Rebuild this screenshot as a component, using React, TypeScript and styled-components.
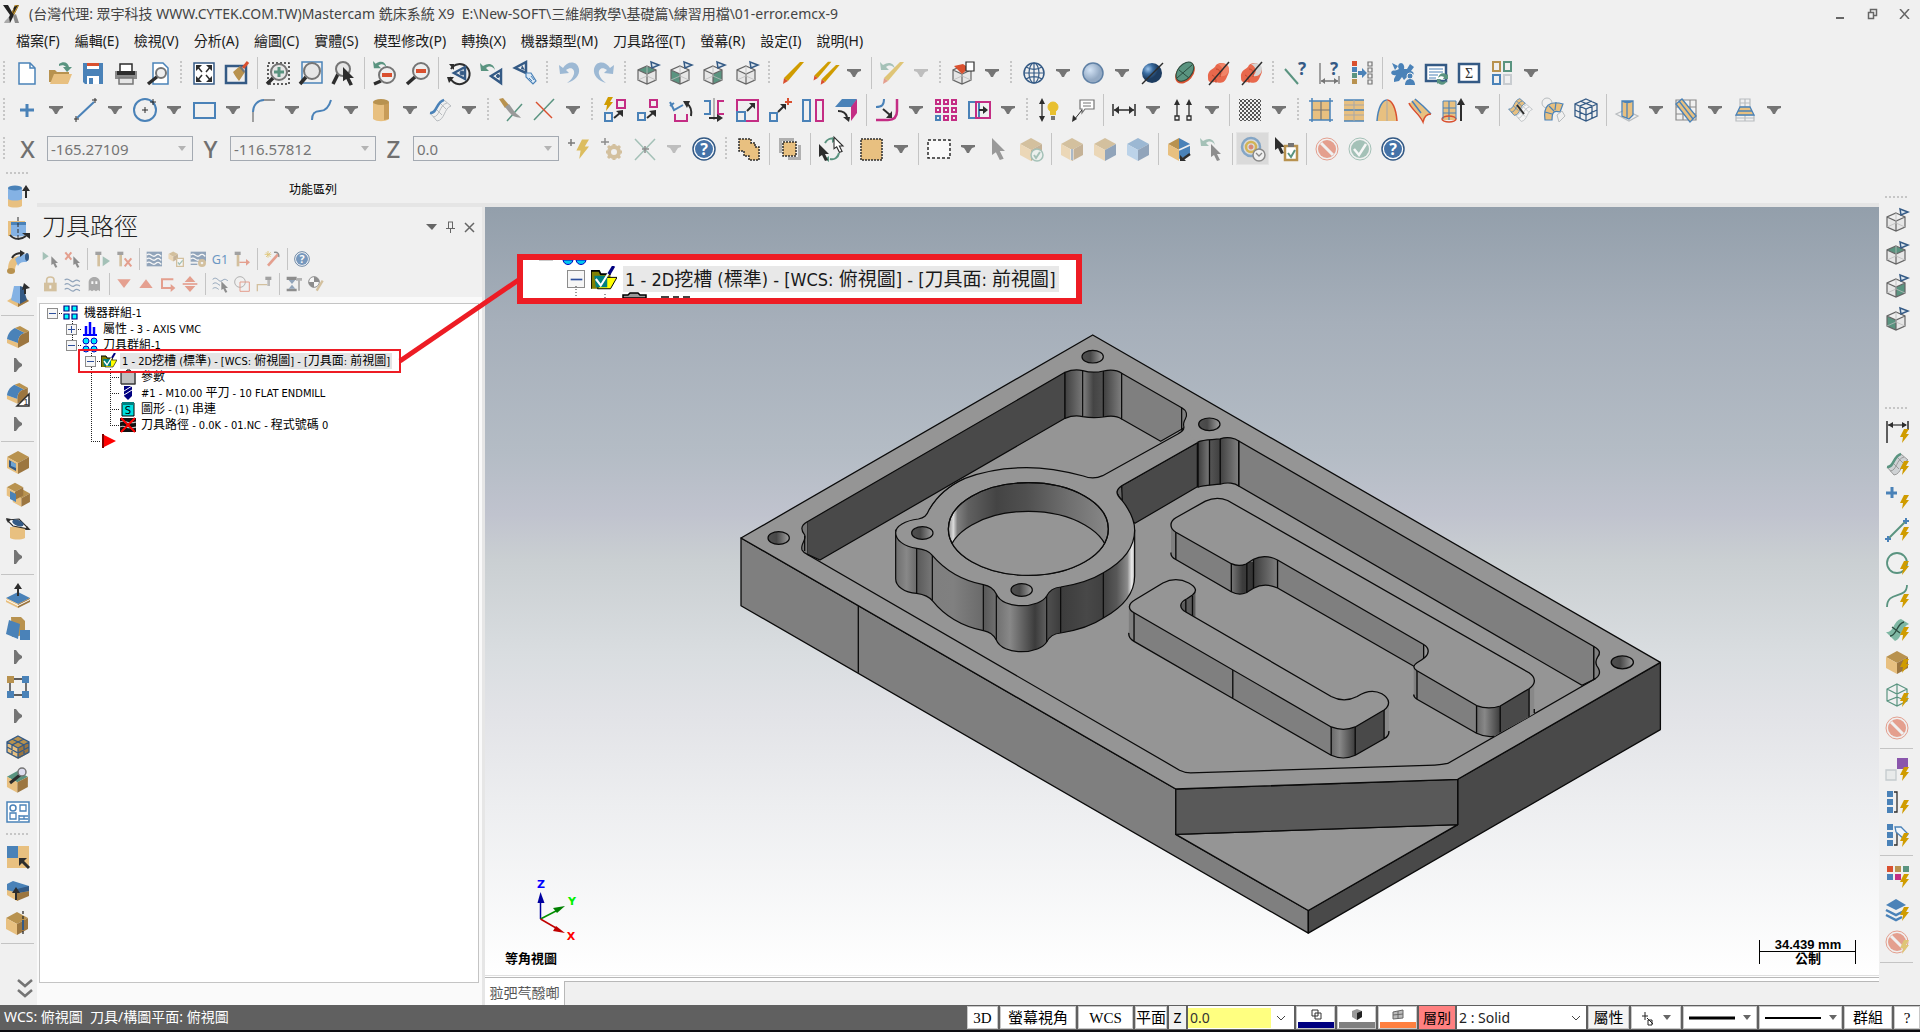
import React, { Fragment, createElement } from "react";
import type { ReactNode } from "react";
import styled, { createGlobalStyle, css } from "styled-components";

/* ---------- palette ---------- */
const B = "#4a82b8";
const N = "#345a85";
const G = "#5a9480";
const M = "#c42d84";
const K = "#2d2d2d";
const O = "#e8c080";
const OD = "#b8924f";
const OX = "#9c7640";
const R = "#d9502f";
const Y = "#d09c00";
const GR = "#757575";
const LG = "#b8bcbf";

/* ---------- drawing helpers ---------- */
const g = (...c: ReactNode[]) => createElement("g", null, ...c);
const P = (d: string, stroke: string, w = 1.5, fill = "none", dash?: string) => (
  <path d={d} stroke={stroke} strokeWidth={w} fill={fill} strokeDasharray={dash} />
);
const F = (d: string, fill: string) => <path d={d} fill={fill} />;
const C = (cx: number, cy: number, r: number, stroke: string, w = 1.5, fill = "none") => (
  <circle cx={cx} cy={cy} r={r} stroke={stroke} strokeWidth={w} fill={fill} />
);
const at = (x: number, y: number, s: number, c: ReactNode) => <g transform={`translate(${x} ${y}) scale(${s})`}>{c}</g>;
const faded = (c: ReactNode, o = 0.5) => <g opacity={o}>{c}</g>;
const sign = (t: string, x: number, y: number, s: number, fill: string) => (
  <text x={x} y={y} fontSize={s} fontWeight="700" fontFamily='"Noto Sans", sans-serif' textAnchor="middle" fill={fill}>{t}</text>
);

const bolt = (x: number, y: number) => at(x, y, 1, F("M5 0h5L7 5h3L3 14l1-6H1z", Y));
const cursor = (x: number, y: number, fill = K) => at(x, y, 1, F("M0 0v13l3-2 3 6 3-1-3-6h4z", fill));
const lens = (x: number, y: number, r: number, fill = "none") =>
  g(P(`M${x - r + 2} ${y + r - 2}L1 23`, K, 3.5), C(x, y, r, GR, 2, fill));
const cube = (top: string, left: string, right: string) =>
  g(F("M12 1l11 6-11 6L1 7z", top), F("M1 7l11 6v11L1 18z", left), F("M23 7l-11 6v11l11-6z", right));
const wireCube = (t = "none", l = "none", r = "none") =>
  g(
    F("M2 9l9 4v10l-9-4z", l === "none" ? "#e6e6e6" : l),
    F("M20 9l-9 4v10l9-4z", r === "none" ? "#e6e6e6" : r),
    F("M11 5l9 4-9 4-9-4z", t === "none" ? "#efefef" : t),
    P("M11 5l9 4v10l-9 4-9-4V9zM2 9l9 4 9-4M11 13v10", "#666", 1.2),
    P("M11 5v10l-9 4M11 15l9 4", "#bbb", 0.8)
  );
const viewCube = (t?: string, l?: string, r?: string) => g(wireCube(t, l, r), P("M15 1l8 3-7 3z", N, 1.5, "#dde6ee"));
const pencil = (dx = 0) => at(dx, 0, 1, g(F("M20 1h4L8 20l-4-3z", Y), F("M4 17l4 3-5 3z", R)));
const backArrow = (x: number, y: number, s = 1) =>
  at(x, y, s, F("M0 0l1 8 8 0-3-3c4-3 7-1 9 2C14 1 9-1 3 3z", G));
const noSign = g(C(12, 12, 11, R, 1), P("M4 8l12 12", "#f0f0f0", 3), C(12, 12, 9, R, 0, R), P("M6 6l12 12", "#f0f0f0", 3));
const helpSign = g(C(12, 12, 11, N, 1.5, "#fff"), C(12, 12, 9, B, 0, "#4573a8"), sign("?", 12, 18, 16, "#fff"));
const surf = (fill: string, line: string) =>
  g(F("M2 15C9 16 8 4 16 2l7 6c-7 2-6 14-14 15z", fill), P("M2 15C9 16 8 4 16 2l7 6c-7 2-6 14-14 15zM5 19c7 0 6-12 14-14M8 11l6 6M12 5l6 6", line, 1));
const limb = (a: string, b: string) =>
  g(F("M2 17C1 8 8 9 10 4c5-4 10-1 11 1 4 5 1 8-1 13-3 6-8 3-11 3-5 1-7 0-7-4z", a), F("M12 3c6-2 10 0 11 4 0 6-4 9-9 8 4-4 4-8-2-12z", b), P("M6 14c4 2 4 5 4 8M10 8c4 0 5 4 4 8", "#b8402a", 0.8), P("M3 24L23 1", K, 1.5));
const roundedEdge = g(
  F("M1 15l11 4v5L1 19z", O),
  F("M1 15C2 9 5 6 9 4l10 5c-5 1-7 5-7 10z", B),
  F("M9 4l5-2 9 5-4 2z", OD),
  F("M12 24v-5c0-5 2-9 7-10l4-2v11z", OX)
);

const icons: Record<string, ReactNode> = {
  newFile: g(P("M4 2h11l5 5v16H4z", B, 1.5, "#fff"), P("M15 2v5h5", B)),
  open: g(F("M1 9h6l2 2h12v10H1z", OD), F("M6 13h18l-4 10H2z", O), F("M11 3c4-3 9-2 10 3h3l-5 5-4-5h3c-2-2-4-2-7-1z", G)),
  save: g(F("M2 2h20v21H4l-2-2z", B), F("M6 2h12v3H6z", R), F("M6 5h12v3H6z", "#fff"), F("M6 15h12v8H6z", "#fff"), F("M8 17h4v6H8z", B)),
  print: g(P("M6 10V3h12v7", K, 1.5, "#fff"), F("M1 10h22v8H1z", "#8a8a8a"), F("M3 10h18v4H3z", K), P("M5 17h14v6H5z", GR, 1.5, "#e6e6e6")),
  preview: g(P("M6 2h10l5 5v16H6z", B, 1.5, "#fff"), lens(14, 12, 5, "#eee")),
  fit: g(P("M2 2h20v21H2z", N, 1.5, "#fff"), P("M5 5l5 6M19 5l-5 6M5 20l5-6M19 20l-5-6", K, 1.5), F("M4 4h6l-6 6zM20 4h-6l6 6zM4 21h6l-6-6zM20 21h-6l6-6z", K)),
  repaint: g(P("M1 5h20v17H1z", N, 2.5), F("M8 11l7-6 5 6-6 9c-2-3-4-5-6-9z", OD), P("M18 7l5-6", R, 3), F("M14 6l5 6 1-2-4-5z", GR)),
  zoomWin: g(P("M2 2h21v21H2z", K, 1.5, "none", "2 2"), lens(13, 11, 8, "#e6e6e6"), P("M13 6v10M8 11h10", G, 3)),
  zoomTarget: g(P("M3 1h20v21H3z", B), lens(13, 10, 8, "#e6e6e6")),
  zoomSel: g(lens(11, 8, 7, "#e6e6e6"), at(11, 6, 1.1, cursor(0, 0))),
  unzoom: g(lens(14, 14, 8, "#eee"), P("M9 14h10", R, 4), backArrow(0, 0, 0.9)),
  zoomOut: g(lens(15, 10, 8, "#eee"), P("M10 10h10", R, 4)),
  dynView: g(P("M4 8a10 10 0 1 1-1 8", K, 2), F("M0 16h7l-5 6zM2 3l5 0 0 6z", K), P("M18 6L7 12l11 6z", N, 2.5), C(15, 12, 2, N, 1, N)),
  prevView: g(backArrow(0, 2), P("M21 9l-10 6 10 7z", N, 2.5), C(18, 15, 1.5, N, 1, N)),
  namedView: g(P("M13 1L2 7l11 5z", N, 2.5), F("M9 4l3 5-4-1z", N), P("M13 12l5 0 5 8-3 3-7-7z", B, 1.2, "#dce9f5"), P("M16 17l3 3M18 15l3 4", B, 1)),
  undo: faded(F("M1 4l1 9 9-1-3-3c5-4 9-1 8 4-1 4-4 7-7 9 8-2 13-8 12-14C19-1 9 0 5 7z", B)),
  redo: faded(F("M23 4l-1 9-9-1 3-3C11 5 7 8 8 13c1 4 4 7 7 9C7 20 2 14 3 8 5-1 15 0 19 7z", B)),
  vTop: viewCube(G),
  vFront: viewCube("none", G),
  vRight: viewCube("none", "none", G),
  vIso: viewCube(),
  pencil: pencil(),
  pencils: g(at(-2, 0, 0.85, pencil()), at(5, 3, 0.9, pencil())),
  undelete: faded(g(backArrow(0, 1), pencil())),
  redCube: g(wireCube(), F("M3 5l9-2 6 4-7 6z", R), P("M15 1h8v9h-8z", K, 1.2, "#fff")),
  globe: g(C(12, 12, 10, N), P("M12 2v20M2 12h20M4 6c5 3 11 3 16 0M4 18c5-3 11-3 16 0", N, 1.2), <ellipse cx="12" cy="12" rx="5" ry="10" fill="none" stroke={N} strokeWidth="1.2" />),
  shade: C(12, 12, 10, "#5f80a5", 1.5, "url(#shadeLight)"),
  ball: g(C(12, 12, 10, N, 0, "url(#shadeDark)"), P("M2 23L23 2", K, 1.5)),
  leaf: g(<ellipse cx="12" cy="12" rx="8" ry="12" transform="rotate(40 12 12)" fill={R} />, <ellipse cx="11" cy="11" rx="7" ry="11" transform="rotate(40 12 12)" fill={G} stroke="#2b4d40" />, P("M4 17L19 4M6 9l10 8", "#2b4d40", 1)),
  limbA: limb("#e8684c", "#f08468"),
  limbC: limb("#e8684c", "#d4d4d4"),
  anaPoint: g(P("M1 8l13 15", G, 2), sign("?", 18, 14, 17, N)),
  anaDist: g(P("M3 2v21M22 15v8M4 20h17", GR, 1.3), F("M4 20l4-3v6zM21 20l-4-3v6z", GR), sign("?", 17, 14, 17, N)),
  anaAttr: g(F("M2 0h5v5H2z", R), F("M2 6h5v5H2z", B), F("M2 12h5v5H2z", G), F("M2 18h5v5H2z", OD), P("M18 1h4v4h-4zM18 7h4v4h-4zM18 13h4v4h-4zM18 19h4v4h-4z", GR, 1.2), F("M8 10h4V7l5 5-5 5v-3H8z", B)),
  puzzle: g(F("M8 8c-2-3 0-6 2-6s4 3 3 6h3l3-5 4 3-3 4c4 1 3 5 0 4l-3-1-1 3-3 3-2-3-3 4-5 1v-3l2-4c-4 1-6-2-4-4 2-1 4 0 7-2z", B), C(19, 15, 3, "#f0f0f0", 1, B), F("M14 24c0-8 10-8 10 0z", B), F("M1 2l6 3-3 4z", B)),
  list: g(P("M2 4h20v16H2z", N, 2.5, "#fff"), P("M5 8h14M5 11h14M5 14h9M5 17h7", B, 1.2), F("M14 17c1-5 6-6 9-3l1-1v5h-5l1-2c-2-1-4-1-6 1zM23 19c-1 5-6 6-9 3l-1 1v-5h4l-1 2c2 1 5 1 7-1z", G)),
  sigma: g(P("M2 3h20v18H2z", N, 2.5, "#fff"), <text x="12" y="17" fontSize="14" fontFamily='"Liberation Serif", serif' textAnchor="middle" fill={K}>Σ</text>),
  grid4: g(P("M3 1h7v9H3z", OD, 2), P("M14 1h7v9h-7z", G, 2), P("M3 14h7v9H3z", B, 2), P("M14 14h7v9h-7z", "#c8ccd0", 2)),

  point: P("M12 6v13M5 12h14", B, 3),
  line: g(P("M3 20L20 4", B, 2), P("M0 21h5M2 18v6M18 2h5M21 0v5", K, 1)),
  circle: g(C(12, 12, 11, B, 2), P("M9 12h6M12 9v6M17 4h6M20 1v6", K, 1)),
  rect: P("M2 5h21v15H2z", B, 2),
  fillet: g(P("M2 14C2 7 7 2 13 2", B, 2), P("M13 2h11M2 14v10", GR, 1.3)),
  spline: P("M2 22c0-6 2-9 8-9s9-4 11-11", B, 2),
  cylinder: g(F("M4 4v17c4 3 12 3 16 0V4z", O), F("M15 5v17l5-1V4z", "#c89c58"), <ellipse cx="12" cy="4" rx="8" ry="3" fill={OD} />),
  surface: g(surf("none", LG), P("M2 15C9 16 8 4 16 2", B, 2.5)),
  trim: g(P("M23 6L8 23", G, 1.5), F("M0 1l4-1 6 7-4 3z", OD), F("M6 9l4-3 5 7c2 3 5 4 7 7-6-1-9-2-12-6z", "#999")),
  cross: g(P("M22 1L2 22", G, 1.5), P("M4 4l16 16", R, 1.5)),
  xDyn: g(bolt(0, -1), P("M14 2h8v8h-8z", M, 2), P("M2 15h7v8H2z", B, 2), P("M11 20l6-5", K, 2), F("M20 12v7l-7-6z", K)),
  xTrans: g(P("M14 2h7v7h-7z", M, 2), P("M2 15h7v7H2z", B, 2), P("M11 20l6-5", K, 2), F("M20 12v7l-7-6z", K)),
  xRot: g(P("M1 4l4 8 9-5M1 8l4-3", B, 2), P("M6 16v7h12v-7", M, 2), P("M22 18c1-6 0-10-5-13", K, 2), F("M14 3l7 0-3 7z", K)),
  xMirror: g(P("M12 0v22", GR, 1), P("M2 3h6v13H2", B, 2), P("M22 3h-6v13h6", M, 2), P("M7 20h10", K, 2), F("M15 16l6 4-6 4z", K)),
  xScale: g(P("M2 2h21v21H2z", M, 2), P("M2 14h8v9H2z", B, 2), P("M12 13l6-6", K, 2), F("M20 5v6l-6-6z", K)),
  xMove: g(P("M2 15h7v8H2z", B, 2), P("M10 14l6-6", K, 2), F("M18 6v6l-6-6z", K), P("M20 0v7M17 4h7", R, 2)),
  xOffset: g(P("M2 2h7v21H2z", B, 2), P("M15 2h7v21h-7z", M, 2)),
  xProj: g(F("M8 1h15l-5 8H1z", B), F("M23 1v14l-6 8V9z", M), P("M4 13c5 0 8 2 9 6", K, 2), F("M9 19h7l-1 5z", K)),
  xOffC: g(P("M1 9c6 0 8-2 8-8", B, 2), P("M1 22h12c6 0 9-3 9-9V1", M, 2.5), P("M8 11l7 6", K, 2), F("M17 13v7h-6z", K)),
  xArray: g(P("M2 2h4v4H2zM10 2h4v4h-4zM18 2h4v4h-4zM2 10h4v4H2zM10 10h4v4h-4zM18 10h4v4h-4zM10 18h4v4h-4zM18 18h4v4h-4z", M, 2), P("M2 18h4v4H2z", B, 2)),
  xStretch: g(P("M2 4h10v16H2z", B, 2), P("M9 4h14v16H9z", M, 2), P("M12 12h5", K, 2), F("M16 8l5 4-5 4z", K)),
  bulb: g(P("M4 3v18", K, 1.3), F("M4 0l3 6H1zM4 24l3-6H1z", K), C(15, 9, 5, "#e8c030", 1, "#e8c030"), F("M12 12h6v5h-6z", "#e8c030"), F("M13 18h4v4h-4z", "#777")),
  note: g(P("M9 2h14v9h-9l-3 4v-4H9z", GR, 1.2, "#fff"), P("M12 5h8M12 8h8", GR, 1), P("M11 12L3 22", K, 1), F("M1 24l1-7 4 4z", K)),
  dim: g(P("M1 6v12M23 6v12M2 12h20", K, 1.5), F("M2 12l5-4v8zM22 12l-5-4v8z", K)),
  twoArrow: g(P("M6 4v14M18 4v14M4 18h4v4H4zM16 18h4v4h-4z", K, 1.3), F("M6 1l3 6H3zM18 1l3 6h-6z", K)),
  checker: g(<rect x="1" y="1" width="22" height="22" fill="url(#check)" />),
  sfA: g(F("M3 3h18v19H3z", O), P("M12 3v19M3 12h18", GR, 1.2), P("M3 0v24M21 0v24M0 3h24M0 22h24", B, 1.5)),
  sfB: g(F("M2 2h20v21H2z", O), P("M2 2h20M2 12h20M2 23h20", B, 1.5), P("M2 7h20M2 17h20M12 2v21", "#a8a8a8", 1)),
  sfC: g(F("M2 23C3 10 7 2 12 2s9 8 10 21z", O), P("M2 23C3 10 7 2 12 2", B), P("M12 2c5 0 9 8 10 21", R), P("M12 2v21", "#a8a8a8", 1)),
  sfD: g(F("M1 6l6-5 8 7c3 3 5 5 8 8-4 0-6 3-7 8-2-4-4-7-7-10z", O), P("M7 1l8 7c3 3 5 5 8 8M4 3l9 12", B), P("M1 5c2 6 10 10 14 19 1-5 4-8 8-8", R)),
  sfE: g(F("M2 3h13v19H2z", O), P("M2 3h13M2 10h13M2 15h13M8 3v19", B, 1.2), <ellipse cx="8" cy="21" rx="7" ry="3" fill="none" stroke={R} strokeWidth="1.5" />, P("M2 3v18M15 3v18", B, 1), P("M20 5v18", K, 2), F("M20 0l4 7h-8z", K)),
  sfF: g(at(6, 5, 0.8, surf("#f4f4f4", LG)), at(-1, -1, 0.8, surf(O, B)), P("M9 7l7 9", K, 2)),
  sfG: g(C(6, 5, 5, LG, 1), F("M4 22C2 8 8 2 22 6l-3 8c-6-2-8 0-8 8z", O), P("M4 22C2 8 8 2 22 6l-3 8c-6-2-8 0-8 8zM8 8l5 5M4 14l7 2M15 4l-1 8", B, 1.2), P("M16 17l5-4 3 5-6 6z", LG, 1)),
  sfH: g(P("M12 1l11 5v12l-11 5L1 18V6zM1 6l11 5 11-5M12 11v12M1 12l11 5 11-5M6 3l12 5v12M18 3L6 8v12", N, 1.3)),
  fly: g(P("M1 16l9-4 13 6-9 5z", LG, 1.2), F("M7 3h11v14l-3 3H8z", O), P("M7 3h11v14l-4 4-7-3zM12 3v17M7 3c3 2 8 2 11 0", B, 1.3)),
  flz: g(P("M2 2h20v20H2zM2 9h20M2 16h20M9 2v20M16 2v20", "#8a8a8a", 1.2), F("M2 6l6-5 14 17-6 6z", O), P("M2 6l6-5 14 17-6 6zM5 3l14 18", B, 1.3)),
  flc: g(P("M7 1h10v8H7zM3 17h18v6H3zM12 1v22M7 5h10M3 20h18", LG, 1.2), F("M7 9h10l4 8H3z", O), P("M7 9h10l4 8H3zM5 13h14", B, 1.3)),

  flashPt: faded(g(P("M4 2v7M1 6h7", K, 1.5), at(8, 1, 1.4, bolt(0, 1))), 0.6),
  gearPt: faded(g(P("M5 1v7M1 5h8", K, 1.5), C(14, 15, 5, OD, 4), P("M14 7v3M14 20v3M6 15h3M19 15h3M8 9l2 2M18 19l2 2M20 9l-2 2M10 19l-2 2", OD, 3))),
  crossPt: faded(g(P("M2 2l20 21M22 2L2 23", G, 1.5), P("M12 9v7M9 12h7", K, 1.5))),
  help: helpSign,
  selA: P("M2 2h12v4h4v4h4v13H12v-4H7v-5H2z", K, 1.5, O, "2 1"),
  selB: g(F("M1 1h15v3H4v12H1z", "#b0b0b0"), F("M10 20h10V8h3v15H10z", "#b0b0b0"), P("M5 5h13v14H5z", K, 1.5, O, "2 1")),
  selC: g(P("M6 6c2-4 6-5 9-4M20 16c-1 5-5 7-9 6", G, 2), F("M13 0l4 3-4 3zM10 19v6l-4-3z", G), cursor(0, 7), at(15, 0, 0.9, P("M0 0v13l3-2 3 6 3-1-3-6h4z", K, 1.2, "#fff"))),
  selBox: P("M1 2h21v21H1z", K, 1.5, O, "2 1"),
  selEmpty: P("M1 3h22v18H1z", K, 1.5, "#fafafa", "3 2"),
  arrowGrey: faded(at(6, 1, 1.3, cursor(0, 0, "#444"))),
  boxCheck: faded(g(cube(OD, O, OX), C(18, 18, 6, G, 1.5, "#e8f0ec"), P("M15 18l2 3 4-6", G, 2))),
  box1: faded(g(cube(OD, O, OX), P("M12 12v11", "#fff", 3), P("M12 12v11", N, 1.5))),
  box2: faded(cube(OD, O, N)),
  box3: faded(cube(B, "#8ab8e4", N)),
  box4: g(F("M12 1l11 6-11 6z", B), F("M12 1v12L1 7z", OD), F("M1 7l11 6v11L1 18z", O), F("M23 7v11l-11 4v-9z", B), P("M12 13l11-5", "#f0f0f0", 1.5), P("M23 17l-7 5", K, 2.5), F("M13 24v-6l6 6z", K)),
  backSel: faded(g(backArrow(0, 1), at(11, 7, 1, cursor(0, 0)))),
  target: faded(g(C(10, 10, 9, B, 2.5), C(10, 10, 5, Y, 2.5), C(10, 10, 2, R, 1, R), C(18, 18, 6, "#555", 1.5, "#fff"), P("M15 16l3 3 3-3", "#555", 1.3)), 0.6),
  clip: g(cursor(1, 0), P("M11 9h12v14H11z", OD, 2.5, "#fff"), F("M14 6h6v4h-6z", GR), P("M14 16l3 4 4-7", G, 2)),
  no: faded(noSign),
  yes: faded(g(C(12, 12, 11, G, 1), C(12, 12, 9, G, 0, G), P("M6 12l5 6 7-11", "#fff", 2.5))),

  extrude: g(F("M2 14h14v8c-3 2-11 2-14 0z", O), F("M2 4h14v11c-3 2-11 2-14 0z", "#84b2e4"), <ellipse cx="9" cy="4" rx="7" ry="2.500" fill={B} />, P("M20 6v8", K, 2), F("M20 1l4 6h-8z", K)),
  revolve: g(F("M2 4h17v15H2z", O), F("M5 6h15v12c-4 2-12 2-15 0z", "#84b2e4"), F("M5 5h15v3H5z", B), P("M12 0v24", K, 1, "none", "4 2"), P("M4 18c4 5 11 5 16 1", K, 2), F("M16 16h8v6z", K)),
  sweep: g(F("M2 20c0-9 3-14 13-14v7c-5 0-6 3-6 9z", O), F("M9 9c3-3 7-5 12-5v8c-5 0-7 0-9 4z", "#84b2e4"), <ellipse cx="21" cy="7" rx="2" ry="4" fill={N} />, <ellipse cx="5" cy="21" rx="4" ry="3" fill={OD} />, P("M6 8c2-4 6-5 10-5", K, 2), F("M14 0l5 3-5 4z", K)),
  loft: g(F("M1 18l6-4h12l4 4-11 6z", O), F("M12 24l11-6-4-3-7 4z", OX), F("M8 3h6v18l-9-4z", "#84b2e4"), F("M14 3l3 1 4 13-7 4z", N), P("M19 3v8", K, 2), F("M18 0l6 5-8 2z", K)),
  edge1: roundedEdge,
  edge2: g(at(0, -2, 0.95, roundedEdge), P("M11 23L23 11v12z", K, 1.5, "#fff"), <text x="20" y="22" fontSize="9" fontFamily='"Liberation Sans", sans-serif' textAnchor="middle" fill={K}>1</text>),
  shell: g(cube(OD, O, OX), F("M3 10l7 4v7l-7-4z", N), F("M5 11l5 3v4l-5-2z", "#6fa4d4")),
  bool: g(at(6, 5, 0.78, cube(OD, O, OX)), at(0, -1, 0.75, cube(OD, O, OX)), F("M4 8l6 3v8l-6-3z", B)),
  trimB: g(F("M4 11h15v11c-4 2-11 2-15 0z", O), P("M1 4l12-1 10 10-16-3z", K, 1.2, "#fff"), <ellipse cx="12" cy="7" rx="6" ry="3" fill={N} transform="rotate(20 12 7)" />, F("M0 2l5 1-3 4zM24 14l-5 0 2-4z", K)),
  plane: g(F("M0 15l12-6 12 6-12 6z", B), F("M0 15l12 6v4L0 19z", O), F("M24 15l-12 6v4l12-6z", OX), F("M0 16l12 6 12-6v1l-12 6-12-6z", "#fff"), P("M12 4v9", K, 2), F("M12 0l4 6H8z", K)),
  face: g(F("M5 1l10 0 4 4v14l-13 2z", OD), F("M3 4l11 4-2 15L0 18z", B), F("M14 14h10v10H14z", B)),
  nodes: g(P("M4 4h16v16H4z", K, 1.3), F("M1 1h7v7H1z", OD), F("M16 1h7v7h-7zM1 16h7v7H1zM16 16h7v7h-7z", B)),
  meshBox: g(at(0, 1, 1, cube(OD, O, OX)), P("M12 2l11 6v10l-11 6L1 18V8zM1 8l11 6 11-6M12 14v10M1 13l11 6 11-6M6 5l12 6v10M18 5L6 11v10", N, 1.3)),
  probe: g(at(0, 3, 0.95, cube(G, O, OX)), P("M14 8L4 16", K, 3), C(16, 5, 4, GR, 1.5, "#dde")),
  layout: g(P("M1 2h22v20H1z", B, 1.5, "#fff"), C(7, 8, 3, B), P("M14 5h6v6h-6zM4 13h6v6H4zM13 16h9M13 19h9M18 16v3M13 15v6", B, 1.3)),
  pick: g(F("M1 1h22v22H1z", O), F("M1 1h11v12H1z", B), P("M14 14l9 9", K, 3), F("M13 13h8l-8 8z", K)),
  push: g(F("M1 10l10 5v8L1 17z", O), F("M1 6l6-3 16 5v5l-11 2L1 12z", B), F("M11 15l12-2v5l-12 5z", OX), F("M23 8v5l-11 2-1-4z", N), P("M10 13v9", K, 2), F("M10 9l4 6H6z", K)),
  section: g(at(-1, 0, 1, cube(OD, O, OX)), P("M17 0v24", K, 1.3, "none", "3 2"), P("M17 9v10", N, 2)),

  dimB: g(P("M2 2v22M23 2v9", K, 1.5), P("M3 6h18", K, 1.2), F("M3 6l5-3v6zM22 6l-5-3v6z", K), bolt(14, 10)),
  surfB: g(surf("#cfd2d4", "#9a9a9a"), P("M2 15C9 16 8 4 16 2", G, 2.5), bolt(14, 9)),
  ptB: g(P("M7 2v11M1 8h11", B, 3), bolt(14, 10)),
  lineB: g(P("M4 20L20 4", G, 2), P("M21 0v6M18 3h6M3 18v6M0 21h6", B, 2), bolt(14, 9)),
  circB: g(C(12, 12, 10, G, 1.8), bolt(14, 10)),
  splB: g(P("M2 23C2 6 22 16 22 1", G, 1.8), bolt(14, 10)),
  srfB: g(F("M1 15C9 16 8 4 16 2l8 5c-8 3-7 15-14 17z", "#7fb8a4"), P("M5 19c7 0 6-12 14-14M7 10l8 6", "#2b4d40", 1.3), bolt(14, 10)),
  boxB: g(cube(OD, O, OX), bolt(14, 9)),
  wireB: g(P("M12 1l10 5v12l-10 5L2 18V6zM2 6l10 5 10-5M12 11v12M12 1v13l-10 4M12 14l10 4", G, 1.2), bolt(14, 10)),
  swatch: g(F("M12 1h11v11H12z", "#8a56ac"), P("M1 13h10v10H1z", "#c4cacd", 1.3, "#e8eaea"), bolt(14, 10)),
  lvA: g(F("M2 1h6v6H2zM2 9h6v6H2zM2 17h6v6H2z", B), P("M9 2h3v20H9", K, 1.3), bolt(14, 10)),
  lvB: g(F("M2 1h6v6H2zM2 9h6v6H2zM2 17h6v6H2z", B), P("M12 9v13H9", K, 1.3), P("M10 4l6 0 7 7-4 5-8-7z", B, 1.3, "#f0f5fa"), bolt(14, 10)),
  colB: g(F("M2 2h6v6H2z", R), F("M10 2h6v6h-6z", OD), F("M18 2h6v6h-6z", G), F("M2 10h6v6H2z", B), F("M10 10h6v6h-6z", M), bolt(14, 10)),
  layB: g(F("M1 8l10-6 10 6-10 5z", B), P("M1 13l10 5 10-5M1 18l10 5 6-3", B, 2.5), bolt(14, 10)),
  noB: faded(g(noSign, bolt(14, 10))),

  pSel: faded(g(F("M1 1l9 7-9 6z", G), cursor(14, 8))),
  pUnsel: faded(g(P("M2 2l9 11M11 2L2 13", R, 3), cursor(14, 8))),
  pTool: faded(g(F("M2 1h9v5H2z", "#555"), F("M5 6h4v17H5z", OD), F("M13 8l11 7-11 8z", G))),
  pToolX: faded(g(F("M2 1h9v5H2z", "#555"), F("M5 6h4v17H5z", OD), P("M13 11l10 12M23 11L13 23", R, 3))),
  pWave: faded(g(F("M1 1h23v22H1z", N), P("M1 6c6-5 8 5 13 1s6-1 9 1M1 12c6-5 8 5 13 1s6-1 9 1M1 18c6-5 8 5 13 1s6-1 9 1", "#fff", 2))),
  pVerify: faded(g(at(0, 0, 0.65, cube(OD, O, OX)), P("M13 11h10v12H13z", OD, 2, "#fff"), P("M15 17l2 3 5-6", G, 2))),
  pPost: faded(g(F("M1 1h23v15H1z", N), P("M1 6c6-5 8 5 13 1s6-1 9 1M1 12c6-5 8 5 13 1", "#fff", 2), P("M1 20h10", N, 2), C(18, 18, 4, OD, 4))),
  pG1: faded(<text x="12" y="19" fontSize="19" fontFamily='"Noto Sans", sans-serif' textAnchor="middle" fill={B}>G1</text>, 0.8),
  pFeed: faded(g(F("M1 1h9v5H1z", "#555"), F("M4 6h4v17H4z", OD), P("M8 17h12", R, 2), F("M18 12l6 5-6 5z", R))),
  pMagic: faded(g(P("M6 22L21 5", R, 4), P("M15 2c6-1 8 3 7 7", K, 2), P("M6 0v10M1 5h10M3 2l7 7M10 2L3 9", Y, 1.3))),
  pLock: faded(g(P("M7 11V6c0-6 11-6 11 0v5", OD, 2.5), F("M3 10h19v13H3z", OD), F("M11 14h3v5h-3z", "#fff"))),
  pWaves: faded(P("M1 6c7-6 9 6 14 2s6-1 9 0M1 13c7-6 9 6 14 2s6-1 9 0M1 20c7-6 9 6 14 2s6-1 9 0", N, 1.8)),
  pGhost: faded(g(F("M4 23V9C5-1 20-1 21 9v14l-3-2-3 2-3-2-3 2-3-2z", "#666"), F("M8 8h3v4H8zM14 8h3v4h-3z", "#fff"))),
  pDown: faded(F("M2 5h20L12 18z", R)),
  pUp: faded(F("M2 18h20L12 5z", R)),
  pNext: faded(g(P("M20 5H3v13h14", R, 3), F("M16 12l7 6-7 6z", R))),
  pUpDn: faded(g(F("M12 0l8 9H4zM12 24l8-9H4z", R), P("M1 12h22", R, 2.5))),
  pSelW: faded(g(P("M1 5c7-6 9 6 14 2s6-1 9 0M1 12c5-4 7 0 11 2M1 19c4-3 6-1 9 1", N, 1.5), cursor(14, 8))),
  pShape: faded(g(C(9, 9, 8, GR, 1.5), P("M9 9h14v14H9z", R, 1.5))),
  pStep: faded(g(P("M2 23V13h15", OD, 2), F("M14 1h9v5h-9z", "#555"), F("M17 6h4v9h-4z", "#888"))),
  pMill: faded(g(F("M1 1h15v5H1zM1 19h15v4H1z", K), F("M4 6l5 6 5-6zM4 19l5-6 5 6z", N), F("M15 3h9v4h-9zM18 7h3v15h-3z", "#777"))),
  pPattern: faded(g(C(9, 9, 8, K, 1.5, "#fff"), F("M9 1a8 8 0 0 1 8 8H9zM9 17a8 8 0 0 1-8-8h8z", K), P("M22 7L13 22", OD, 3.5)))
};

/* ---------- toolbar contents ("=" grip, "|" separator, "v" arrow, "x" dimmed arrow) ---------- */
const row1 = "= newFile open save print preview = fit repaint | zoomWin zoomTarget zoomSel | unzoom zoomOut | dynView prevView namedView = undo redo = vTop vFront vRight vIso = pencil pencils v | undelete x = redCube v = globe v shade v ball leaf limbA limbC = anaPoint anaDist anaAttr | puzzle list sigma grid4 v";
const row2 = "= point v line v circle v rect v fillet v spline v cylinder v surface v = trim cross v = xDyn xTrans xRot xMirror xScale xMove xOffset xProj | xOffC v xArray xStretch v = bulb note | dim v twoArrow v | checker v = sfA sfB sfC sfD sfE v | sfF sfG sfH | fly v flz v flc v";
const row3 = "flashPt gearPt crossPt x help = selA | selB | selC | selBox v | selEmpty v arrowGrey boxCheck | box1 box2 box3 | box4 backSel | target* clip | no yes help";
const leftDock = "= extrude revolve sweep loft | edge1 v edge2 v | shell bool trimB v | plane face v nodes v meshBox probe layout = pick push section |";
const rightTop = "= vIso vTop vRight vFront";
const rightBottom = "= dimB surfB ptB lineB circB splB srfB boxB wireB no | swatch lvA lvB | colB layB noB |";
const panelRow1 = "pSel pUnsel | pTool pToolX | pWave pVerify pPost pG1 pFeed | pMagic | phelp";
const panelRow2 = "pLock pWaves pGhost | pDown pUp pNext pUpDn | pSelW pShape pStep | pMill pPattern";
icons.phelp = faded(helpSign, 0.7);

/* ---------- styled parts ---------- */
const ui = '"Noto Sans", "Noto Sans CJK TC", sans-serif';

const GlobalStyle = createGlobalStyle`
  *, *::before, *::after { box-sizing: border-box; }
  body { margin: 0; background: #f0f0f0; font-family: ${ui}; color: #1a1a1a; }
  button, input, select { font: inherit; color: inherit; }
`;

const Page = styled.div`
  display: flex;
  flex-direction: column;
  height: 100vh;
  overflow: hidden;
  background: #f0f0f0;
`;

const TitleBar = styled.header`
  display: flex;
  align-items: center;
  gap: 8px;
  height: 27px;
  padding: 0 8px 0 3px;
  flex: none;
`;
const Title = styled.h1`
  margin: 0;
  font-size: 14px;
  font-weight: 400;
  line-height: 20px;
  color: #444;
  white-space: pre;
  flex: 1;
`;
const WindowButtons = styled.div`
  display: flex;
  gap: 16px;
`;
const Bare = styled.button`
  display: grid;
  place-items: center;
  padding: 0;
  border: 0;
  background: none;
`;
const WinButton = styled(Bare)`
  width: 16px;
  height: 16px;
`;

const MenuBar = styled.nav`
  display: flex;
  align-items: center;
  gap: 15px;
  height: 27px;
  padding-left: 16px;
  flex: none;
`;
const MenuItem = styled(Bare)`
  font-size: 14px;
  line-height: 20px;
`;

const Strip = styled.div<{ $vertical?: boolean; $h?: number }>`
  display: flex;
  flex: none;
  align-items: center;
  ${p => p.$vertical ? css`flex-direction: column; width: 33px;` : css`height: ${p.$h || 37}px;`}
`;
const MainStrip = styled(Strip)`
  margin-left: -2px;
`;
const SelectStrip = styled(Strip)`
  padding-left: 3px;
`;
const IconButton = styled(Bare)<{ $size: number; $active?: boolean }>`
  flex: none;
  width: ${p => p.$size}px;
  height: ${p => p.$size}px;
  ${p => p.$active && css`background: #dadada; box-shadow: inset 0 0 0 1px #e4e4e4;`}
`;
const ArrowButton = styled(Bare)<{ $dim?: boolean }>`
  flex: none;
  width: 26px;
  height: 26px;
  opacity: ${p => (p.$dim ? 0.4 : 1)};
`;
const Grip = styled.i<{ $vertical?: boolean }>`
  flex: none;
  width: ${p => (p.$vertical ? 24 : 12)}px;
  height: ${p => (p.$vertical ? 12 : 24)}px;
  background: ${p => p.$vertical
    ? "repeating-linear-gradient(90deg, #c6c6c6 0 2px, transparent 2px 4px) center / 100% 2px no-repeat"
    : "repeating-linear-gradient(#c6c6c6 0 2px, transparent 2px 4px) center / 2px 100% no-repeat"};
`;
const Separator = styled.i<{ $vertical?: boolean; $small?: boolean }>`
  flex: none;
  width: ${p => (p.$vertical ? "33px" : "8px")};
  height: ${p => (p.$vertical ? "8px" : p.$small ? "22px" : "32px")};
  background: linear-gradient(#c4c4c4, #c4c4c4) center / ${p => (p.$vertical ? "100% 1px" : "1px 100%")} no-repeat;
`;

const CoordRow = styled.div`
  display: flex;
  align-items: center;
  height: 41px;
  flex: none;
  margin-left: -2px;
`;
const CoordLabel = styled.label`
  width: 37px;
  padding-right: 2px;
  text-align: center;
  font-size: 24px;
  font-weight: 500;
  line-height: 28px;
  color: #707070;
`;
const CoordBox = styled.div`
  display: flex;
  align-items: center;
  width: 146px;
  height: 25px;
  border: 1px solid #a4aab2;
  padding-right: 6px;
`;
const CoordInput = styled.input`
  flex: 1;
  min-width: 0;
  border: 0;
  padding: 0 3px;
  background: none;
  font-size: 15px;
  line-height: 20px;
  color: #757575;
`;

const Body = styled.div`
  display: flex;
  flex: 1;
  min-height: 0;
`;
const Dock = styled.aside<{ $side: "left" | "right" }>`
  display: flex;
  flex-direction: column;
  flex: none;
  width: ${p => (p.$side === "left" ? 37 : 41)}px;
  padding: ${p => (p.$side === "left" ? "0 0 4px 1px" : "22px 0 0 1px")};
  margin-top: ${p => (p.$side === "left" ? "-2px" : "0")};
`;
const DockGap = styled.div`
  height: 67px;
`;
const More = styled(Bare)`
  width: 20px;
  height: 24px;
  margin: auto 0 0 14px;
`;
const Center = styled.div`
  display: flex;
  flex-direction: column;
  flex: 1;
  min-width: 0;
`;
const RibbonName = styled.div`
  display: flex;
  align-items: center;
  height: 34px;
  padding: 8px 0 0 252px;
  font-size: 12px;
  line-height: 16px;
  color: #000;
`;
const Workspace = styled.main`
  position: relative;
  display: flex;
  flex: 1;
  min-height: 0;
  border-top: 4px solid #e5e5e5;
`;

const Panel = styled.section`
  display: flex;
  flex-direction: column;
  flex: none;
  width: 448px;
  border-right: 3px solid #e6e6e6;
`;
const PanelHead = styled.div`
  display: flex;
  align-items: center;
  gap: 3px;
  height: 40px;
  padding: 0 5px 0 5px;
`;
const PanelTitle = styled.h2`
  flex: 1;
  margin: 0;
  padding-bottom: 2px;
  font-size: 24px;
  font-weight: 300;
  line-height: 32px;
  color: #222;
`;
const PanelTools = styled.div`
  display: flex;
  flex-direction: column;
  gap: 2px;
  padding: 0 0 2px 2px;
`;
const TreeFrame = styled.div`
  display: flex;
  flex: 1;
  min-height: 0;
  padding: 6px 3px 22px 2px;
  background: #fafafa;
`;
const Tree = styled.ul`
  position: relative;
  flex: 1;
  margin: 0;
  padding: 1px 0 0 7px;
  list-style: none;
  border: 1px solid #c4c4c4;
  background: #fff;
`;
const TreeRow = styled.li`
  display: flex;
  height: 16px;
`;
const dotsV = "repeating-linear-gradient(#222 0 1px, transparent 1px 2px)";
const dotsH = "repeating-linear-gradient(90deg, #222 0 1px, transparent 1px 2px)";
const Stem = styled.i<{ $on: boolean }>`
  width: 19px;
  background: ${p => (p.$on ? `${dotsV} 6px 0 / 1px 16px no-repeat` : "none")};
`;
const Branch = styled.i<{ $kind: "open" | "closed" | "leaf" | "last" | "root" }>`
  display: flex;
  align-items: center;
  width: 16px;
  background: ${dotsH} 6px 8px / 10px 1px no-repeat${p => (p.$kind === "root" ? "" : `, ${dotsV} 6px 0 / 1px ${p.$kind === "last" ? 8 : 16}px no-repeat`)};
`;
const Expander = styled(Bare)<{ $size?: number }>`
  width: ${p => p.$size || 11}px;
  height: ${p => p.$size || 11}px;
  border: 1px solid #8c8c8c;
  background: #f6f6f6;
`;
const TreeLabel = styled.span<{ $picked?: boolean }>`
  margin-left: 3px;
  padding: 0 2px;
  font-family: "DejaVu Sans Condensed", "DejaVu Sans", "Noto Sans CJK TC", sans-serif;
  font-size: 12px;
  line-height: 16px;
  white-space: pre;
  color: #000;
  background: ${p => (p.$picked ? "#e4e4e4" : "none")};
`;
const Latin = styled.span`
  font-family: "DejaVu Sans Condensed", "DejaVu Sans", sans-serif;
  font-size: 11px;
`;
const RowFrame = styled.div`
  position: absolute;
  left: 38px;
  top: 45px;
  width: 323px;
  height: 24px;
  border: 2px solid #ed1c24;
`;
const Leader = styled.svg`
  position: absolute;
  left: 361px;
  top: 66px;
`;
const Callout = styled.div`
  position: absolute;
  left: 480px;
  top: 47px;
  display: flex;
  align-items: center;
  gap: 6px;
  width: 565px;
  height: 50px;
  padding-left: 44px;
  border: 6px solid #ed1c24;
  background: #fff;
`;
const CalloutEdges = styled.svg`
  position: absolute;
  left: 0;
  top: 0;
`;
const CalloutText = styled.span`
  padding: 0 4px 0 2px;
  background: #e8e8e8;
  font-family: "Noto Sans CJK TC", sans-serif;
  font-size: 19px;
  line-height: 24px;
  white-space: nowrap;
`;
const CalloutLatin = styled.span`
  font-family: "DejaVu Sans Condensed", "DejaVu Sans", sans-serif;
  font-size: 18px;
`;

const ViewColumn = styled.section`
  display: flex;
  flex-direction: column;
  flex: 1;
  min-width: 0;
`;
const Viewport = styled.div`
  flex: 1;
  min-height: 0;
  background: linear-gradient(#939fab 0%, #a6afba 15%, #b4bcc5 32%, #c0c3ce 40%, #cacfd2 46%, #d9dde0 58%, #e2e3e7 66%, #edeef0 78%, #ffffff 100%);
  svg { display: block; width: 100%; height: 100%; }
`;
const TabBar = styled.div`
  display: flex;
  flex: none;
  height: 30px;
  padding-top: 6px;
  background: linear-gradient(#e0e0e0 0 1px, #fff 1px 2px, #b8b8b8 2px 3px, #fff 3px);
`;
const Tab = styled.button`
  width: 80px;
  border: 0;
  border-right: 1px solid #b8b8b8;
  padding: 0;
  background: #fff;
  font-size: 14px;
  line-height: 22px;
  color: #555;
`;
const TabRest = styled.div`
  flex: 1;
  border-top: 1px solid #b8b8b8;
  background: #f0f0f0;
`;

const StatusBar = styled.footer`
  display: flex;
  flex: none;
  gap: 2px;
  height: 27px;
  padding: 1px 0;
  border-bottom: 2px solid #0c0c10;
  background: #606060;
`;
const StatusText = styled.span`
  flex: 1;
  padding-left: 4px;
  font-size: 14px;
  line-height: 22px;
  color: #fff;
  white-space: pre;
`;
const StatusButton = styled.button<{ $w: number; $bg?: string }>`
  display: flex;
  align-items: center;
  justify-content: center;
  gap: 8px;
  flex: none;
  width: ${p => p.$w}px;
  padding: 0;
  border: 1px solid #c8c8c8;
  background: ${p => p.$bg || "#fff"};
  font-family: "Liberation Serif", "Noto Sans CJK TC", serif;
  font-size: 15px;
  line-height: 20px;
  color: #000;
`;
const StatusLabel = styled.label<{ $w: number; $bg: string }>`
  display: grid;
  place-items: center;
  width: ${p => p.$w}px;
  background: ${p => p.$bg};
  font-size: 14px;
  line-height: 20px;
  color: #000;
`;
const DepthBox = styled.div`
  display: flex;
  align-items: center;
  width: 106px;
  background: #fff;
`;
const DepthInput = styled.input`
  width: 83px;
  height: 20px;
  border: 0;
  padding: 0 2px;
  background: #ffff80;
  font-size: 14px;
  color: #333;
  margin-right: 6px;
`;
const LevelBox = styled.div`
  display: flex;
  align-items: center;
  width: 129px;
  padding-right: 5px;
  background: #fff;
`;
const LevelSelect = styled.select`
  flex: 1;
  border: 0;
  padding: 0 2px;
  background: none;
  appearance: none;
  font-size: 14px;
  line-height: 20px;
  color: #222;
`;

/* ---------- components ---------- */
const Icon = ({ name, size = 24 }: { name: string; size?: number }) => (
  <svg width={size} height={size} viewBox="0 0 24 24" overflow="visible" aria-hidden="true">{icons[name]}</svg>
);

const DownArrow = () => (
  <svg width="14" height="8" aria-hidden="true"><path d="M0 0h14v2l-3 1-2 3-1 2H6L5 6 3 3 0 2z" fill="#757575" /></svg>
);
const RightArrow = () => (
  <svg width="8" height="14" aria-hidden="true"><path d="M0 0h2l3 4 3 2v2l-3 2-3 4H0z" fill="#757575" /></svg>
);
const Chevron = () => (
  <svg width="9" height="6" aria-hidden="true"><path d="M0 1l4 4 4-4" fill="none" stroke="#444" /></svg>
);
const TinyArrow = ({ fill = "#666" }: { fill?: string }) => (
  <svg width="8" height="5" aria-hidden="true"><path d="M0 0h8L4 5z" fill={fill} /></svg>
);

function Tools({ items, vertical, size = 33, icon = 24 }: { items: string; vertical?: boolean; size?: number; icon?: number }) {
  return (
    <>
      {items.split(" ").map((item, i) => {
        if (item === "=") return <Grip key={i} $vertical={vertical} />;
        if (item === "|") return <Separator key={i} $vertical={vertical} $small={size < 30} />;
        if (item === "v" || item === "x")
          return (
            <ArrowButton key={i} $dim={item === "x"} aria-label="More">
              {vertical ? <RightArrow /> : <DownArrow />}
            </ArrowButton>
          );
        const name = item.replace("*", "");
        return (
          <IconButton key={i} $size={size} $active={item !== name} aria-label={name}>
            <Icon name={name} size={icon} />
          </IconButton>
        );
      })}
    </>
  );
}

function Coord({ axis, value }: { axis: string; value: string }) {
  return (
    <>
      <CoordLabel htmlFor={`coord-${axis}`}>{axis}</CoordLabel>
      <CoordBox>
        <CoordInput id={`coord-${axis}`} defaultValue={value} />
        <TinyArrow fill="#b4b4b4" />
      </CoordBox>
    </>
  );
}

const mixed = (text: string, Part: React.ElementType) =>
  text.split(/([\u3400-\u9fff]+)/).filter(Boolean).map((t, i) =>
    /[\u3400-\u9fff]/.test(t) ? <Fragment key={i}>{t}</Fragment> : <Part key={i}>{t}</Part>
  );

const folder = g(
  F("M0 3h5l1 2h6v9H0z", "#808000"),
  P("M0 14V3h5l1 2h6", "#000", 1),
  F("M4 14l3-7h9l-4 7z", "#ffff00"),
  P("M4 14l3-7h9l-4 7z", "#000", 0.6),
  F("M2 6h8v7H3z", "#008080"),
  P("M3 8l3 4 5-8", "#fff", 1.3),
  P("M11 5l3-5", "#000080", 2)
);
const treeIcons: Record<string, ReactNode> = {
  machine: P("M1 1h5v5H1zM9 1h5v5H9zM1 9h5v5H1zM9 9h5v5H9z", "#000080", 1.2, "#00ffff"),
  props: g(P("M4 5v9M8 1v13M12 6v8", "#0000ff", 2.5), P("M1 14h14", "#0000ff", 2)),
  group: g(C(4, 4, 3, "#0000c0", 1, "#00e8ff"), C(12, 4, 3, "#0000c0", 1, "#00e8ff"), C(4, 12, 3, "#0000c0", 1, "#00e8ff"), C(12, 12, 3, "#0000c0", 1, "#00e8ff")),
  folder,
  params: g(P("M1 3h5l1-2h3l1 2h4v12H1z", "#000", 1, "#c0c0c0"), P("M1 15h15V4", "#555", 1)),
  tool: g(F("M4 1h8v10l-4 4-4-4z", "#000080"), P("M4 6l8-5M4 10l8-5", "#fff", 1)),
  geometry: g(F("M2 2h12v13H2z", "#00e0e0"), P("M2 2h12v13H2z", "#000", 1), F("M2 1h12v3H2z", "#008080"), <text x="8" y="13" fontSize="10" fontFamily='"DejaVu Sans", sans-serif' textAnchor="middle" fill="#000">S</text>),
  nc: g(F("M0 1h16v14H0z", "#111"), P("M0 5c5-3 6 3 16 0M0 10c5-3 6 3 16 0", "#bbb", 1.2), P("M1 1l14 14M15 1L1 15", "#ff0000", 2)),
  flag: g(F("M1 1h2v14H1z", "#800000"), F("M3 2l12 6-12 6z", "#ff0000"))
};

type Node = { level: number; kind: "open" | "closed" | "leaf" | "last" | "root"; icon: string; text: string; stems?: number[]; picked?: boolean };
const picked = "1 - 2D挖槽 (標準) - [WCS: 俯視圖] - [刀具面: 前視圖]";
const nodes: Node[] = [
  { level: 0, kind: "root", icon: "machine", text: "機器群組-1" },
  { level: 1, kind: "closed", icon: "props", text: "屬性 - 3 - AXIS VMC" },
  { level: 1, kind: "last", icon: "group", text: "刀具群組-1" },
  { level: 2, kind: "open", icon: "folder", text: picked, picked: true },
  { level: 3, kind: "leaf", icon: "params", text: "參數", stems: [2] },
  { level: 3, kind: "leaf", icon: "tool", text: "#1 - M10.00 平刀 - 10 FLAT ENDMILL", stems: [2] },
  { level: 3, kind: "leaf", icon: "geometry", text: "圖形 - (1) 串連", stems: [2] },
  { level: 3, kind: "last", icon: "nc", text: "刀具路徑 - 0.0K - 01.NC - 程式號碼 0", stems: [2] },
  { level: 2, kind: "last", icon: "flag", text: "" }
];

const ExpandMark = ({ plus, size = 9 }: { plus?: boolean; size?: number }) => (
  <svg width={size} height={size} viewBox="0 0 9 9" aria-hidden="true">
    <path d={plus ? "M1 4.5h7M4.5 1v7" : "M1 4.5h7"} stroke="#2d4f9c" />
  </svg>
);

function TreeView() {
  return (
    <Tree>
      {nodes.map((n, i) => (
        <TreeRow key={i}>
          {Array.from({ length: n.level }, (_, l) => <Stem key={l} $on={!!n.stems?.includes(l)} />)}
          <Branch $kind={n.kind}>
            {n.level < 3 && n.text && (
              <Expander aria-label="Toggle"><ExpandMark plus={n.kind === "closed"} /></Expander>
            )}
          </Branch>
          <svg width="16" height="16" viewBox="0 0 16 16" aria-hidden="true">{treeIcons[n.icon]}</svg>
          {n.text && <TreeLabel $picked={n.picked}>{mixed(n.text, Latin)}</TreeLabel>}
        </TreeRow>
      ))}
      <RowFrame />
    </Tree>
  );
}

const stops = (list: [number, string][]) => list.map(([o, c], i) => <stop key={i} offset={o} stopColor={c} />);
const Grad = ({ id, x1, x2, list }: { id: string; x1: number; x2: number; list: [number, string][] }) => (
  <linearGradient id={id} gradientUnits="userSpaceOnUse" x1={x1} x2={x2} y1="0" y2="0">
    {stops(list.map(([x, c]) => [(x - x1) / (x2 - x1), c] as [number, string]))}
  </linearGradient>
);

const TOP = "#959595";
const SIDE = "#7f7f7f";
const DARK = "#494949";

function Part() {
  const ring =
    "C527 660 552 680 590 685C615 688 628 694 637 706C670 745 720 780 790 794C812 798 822 808 829 822C838 845 870 857 905 857C940 857 970 845 980 828C988 812 1000 803 1022 801C1070 793 1115 780 1150 758C1215 722 1244 680 1244 630";
  return (
    <g strokeLinejoin="round">
      <g stroke="#0a0a0a" strokeWidth="1.3">
        <path d="M741 538L1175.800 789v45.400L1308.300 910.500v22.600L741 605.700z" fill={SIDE} />
        <path d="M1660.400 662.400L1457.700 779.300v45.300L1308.300 910.500v22.600L1660.400 729.600z" fill={DARK} />
        <path d="M1175.800 834.400L1457.700 824.600 1308.300 910.500z" fill={TOP} />
        <path d="M1175.800 789L1457.700 779.300v45.300L1175.800 834.400z" fill="#595959" />
        <path d="M1092.700 335L1660.400 662.400 1457.700 779.300 1175.800 789 741 538z" fill={TOP} />
        <path d="M858.300 606v66.700" />
      </g>

      {/* rear pocket and round boss */}
      <g transform="translate(720 320) scale(.33333)" stroke="#0a0a0a" strokeWidth="3.600" fill="none">
        <path d="M262 605L1035 157V295L300 720 262 703z" fill={DARK} />
        <path d="M262 605C238 618 245 633 254 645C260 660 240 672 246 690Q250 698 262 703" fill="#777" />
        <path d="M254 648v45" />
        <path d="M1035 157C1055 149 1075 149 1088 152C1110 158 1130 158 1150 153C1170 149 1190 149 1205 160V297C1190 287 1170 287 1150 291C1130 294 1110 294 1088 290C1075 287 1055 287 1035 295z" fill="url(#rearCorner)" />
        <path d="M1088 152v138M1150 153v138" />
        <path d="M1205 160L1385 263V328L1322 364 1205 297z" fill={SIDE} />
        <path d="M1385 263C1402 272 1402 287 1396 297Q1388 310 1392 322L1385 330z" fill={SIDE} />
        <path d="M1205 497L1432 368V500L1245 610 1200 560z" fill={DARK} />
        <path d="M1205 497Q1190 505 1191 518Q1195 530 1207 542z" fill="#666" />

        <path d={"M527 776" + "C527 798 552 818 590 820C615 824 628 830 637 842C670 883 720 918 790 932C812 936 822 946 829 960C838 983 870 995 905 995C940 995 970 983 980 966C988 950 1000 941 1022 939C1070 931 1115 918 1150 894C1215 858 1244 818 1244 768V630H527z"} fill="url(#bossSide)" />
        <path d="M590 680v140M637 700v142M790 790v142M829 815v145M980 820v146M1022 800v139M1150 755v139" />
        <path
          d={"M1392 325Q1388 335 1375 341L1148 467Q1120 480 1090 468C1010 447 960 443 920 443C850 443 780 458 735 475C690 495 650 530 628 568C620 588 612 594 595 597C555 602 527 618 527 638" + ring + "C1244 600 1225 565 1205 540C1195 530 1190 522 1191 515Q1193 505 1205 497L1432 368"}
          fill={TOP}
        />
        <path d="M735 475C690 495 650 530 628 568" strokeWidth="2" />
        <ellipse cx="925" cy="627" rx="240" ry="139" fill="url(#boreWall)" />
        <g clipPath="url(#bore)"><ellipse cx="925" cy="713" rx="240" ry="139" fill={TOP} /></g>
        <ellipse cx="925" cy="627" rx="240" ry="139" />
        {[[1118, 110], [176, 654], [607, 639], [905, 810], [1468, 313]].map(([x, y]) => (
          <ellipse key={x} cx={x} cy={y} rx="32" ry="19" fill="url(#hole)" />
        ))}
      </g>

      {/* front pocket with its two islands */}
      <g transform="translate(1100 420) scale(.3699 .338)" stroke="#0a0a0a" strokeWidth="3.600" fill="none">
        <path d="M375 62L1335 670V768L1303 785 375 195z" fill={SIDE} />
        <path d="M265 65C280 57 300 59 325 56C345 48 365 54 375 62V195C365 187 345 183 325 190C300 193 280 192 265 199z" fill="url(#frontCorner)" />
        <path d="M296 59v134M325 56v134" />
        <path d="M1335 670C1355 682 1352 692 1345 702Q1338 715 1343 727Q1352 740 1350 750Q1348 760 1335 768z" fill={SIDE} />
        <path d="M1340 765L940 1016Q925 1020 905 1021L245 1044Q230 1044 215 1036L-791 398" />

        <path d="M192 310V395Q192 404 205 413L355 510Q375 520 395 510L415 497Q445 480 480 497L850 727 875 705V640L480 400 345 400z" fill={SIDE} stroke="none" />
        <path d="M355 420h60v78l-20 12Q375 520 355 508z" fill="url(#islandCorner)" stroke="none" />
        <path d="M415 400h65v97Q445 480 415 498z" fill="url(#islandInner)" stroke="none" />
        <path d="M205 332v81M355 425v84M397 425v86M415 412v86M480 414v83M875 664v42" />
        <path d="M192 392Q190 404 205 413L355 508Q375 520 395 511L415 498Q445 480 480 497L850 729" />
        <path d="M848 730V812Q848 820 857 826L1018 927Q1040 939 1065 936L1082 924 1160 878V790z" fill={SIDE} stroke="none" />
        <path d="M1018 840h64v85l-18 12Q1040 939 1018 927z" fill="url(#islandEnd)" stroke="none" />
        <path d="M1082 840L1160 790V878L1082 925z" fill={DARK} stroke="none" />
        <path d="M1160 790L1174 770V868L1160 878z" fill="#888" stroke="none" />
        <path d="M857 742v84M1018 845v82M1082 846v78M1160 796v82M848 812Q848 820 857 826L1018 927Q1040 939 1065 936M1174 855v12" />
        <path d="M205 332C187 320 188 300 205 289L285 240Q315 225 345 238L1160 748C1180 763 1178 782 1160 795L1082 846Q1050 858 1018 845L857 742Q840 730 857 718L870 709C892 695 892 675 875 664L480 414Q445 395 415 412L395 426Q375 435 355 425z" fill={TOP} />

        <path d="M78 550V640Q78 648 92 655L625 992V900z" fill={SIDE} stroke="none" />
        <path d="M625 900h65v92Q658 1008 625 992z" fill="url(#islandFoot)" stroke="none" />
        <path d="M690 908L768 850V943L690 992z" fill={DARK} stroke="none" />
        <path d="M768 850L781 840V925Q780 935 768 943z" fill="#888" stroke="none" />
        <path d="M92 570v85M359 740v82M625 908v84M690 908v84M768 858v85M78 630Q76 645 92 655L625 992Q658 1008 690 992L768 943Q782 935 781 920" />
        <path d="M258 505V583L235 573 215 550 240 525z" fill="#5c5c5c" stroke="none" />
        <path d="M232 532v38M250 520v62" />
        <path d="M92 570C75 560 75 545 95 532L170 482Q205 462 240 482C262 495 262 508 250 518L235 529C215 540 212 555 232 568L625 818Q660 838 695 818C725 797 745 800 762 810C785 825 785 845 768 858L690 908Q658 922 625 908z" fill={TOP} />
        <ellipse cx="1412" cy="717" rx="30" ry="19" fill="url(#hole)" />
      </g>
    </g>
  );
}

function Scene() {
  return (
    <svg viewBox="485 207 1394 768" role="img" aria-label="等角視圖">
      <defs>
        <Grad id="rearCorner" x1={1035} x2={1205} list={[[1035, "#404040"], [1087, "#777"], [1089, "#808080"], [1120, "#444"], [1149, "#505050"], [1151, "#404040"], [1205, "#7f7f7f"]]} />
        <Grad id="bossSide" x1={527} x2={1244} list={[[527, "#6e6e6e"], [560, "#888"], [590, "#6a6a6a"], [591, "#5a5a5a"], [636, "#777"], [638, "#7f7f7f"], [700, "#808080"], [790, "#6a6a6a"], [791, "#585858"], [829, "#707070"], [870, "#888"], [945, "#3c3c3c"], [980, "#606060"], [982, "#505050"], [1022, "#3c3c3c"], [1100, "#484848"], [1150, "#404040"], [1190, "#585858"], [1222, "#8a8a8a"], [1236, "#f0f0f0"], [1244, "#999"]]} />
        <Grad id="boreWall" x1={685} x2={1165} list={[[685, "#8a8a8a"], [700, "#dcdcdc"], [712, "#808080"], [745, "#606060"], [830, "#444"], [920, "#505050"], [1050, "#707070"], [1165, "#888"]]} />
        <Grad id="frontCorner" x1={265} x2={375} list={[[265, "#3c3c3c"], [295, "#777"], [297, "#555"], [325, "#404040"], [327, "#444"], [375, "#808080"]]} />
        <Grad id="islandCorner" x1={355} x2={415} list={[[355, "#777"], [385, "#3c3c3c"], [415, "#333"]]} />
        <Grad id="islandInner" x1={415} x2={480} list={[[415, "#3c3c3c"], [480, "#808080"]]} />
        <Grad id="islandEnd" x1={1018} x2={1082} list={[[1018, "#6a6a6a"], [1040, "#888"], [1082, "#3c3c3c"]]} />
        <Grad id="islandFoot" x1={625} x2={690} list={[[625, "#6a6a6a"], [648, "#888"], [690, "#3c3c3c"]]} />
        <linearGradient id="hole">{stops([[0, "#505050"], [0.4, "#484848"], [1, "#a0a0a0"]])}</linearGradient>
        <clipPath id="bore"><ellipse cx="925" cy="627" rx="240" ry="139" /></clipPath>
      </defs>
      <Part />
      <g strokeWidth="1.500">
        <path d="M540.500 919V900" stroke="#0000a0" />
        <path d="M540.500 892l4 11h-7z" fill="#0000a0" />
        <path d="M540.500 919L556 911" stroke="#009000" />
        <path d="M565 906l-8 7-4-5z" fill="#008000" />
        <path d="M540.500 919L556 928" stroke="#c00000" />
        <path d="M565 933l-12-2 3-5z" fill="#c00000" />
      </g>
      <g fontFamily='"DejaVu Sans", "Noto Sans CJK TC", sans-serif' fontWeight="700" fontSize="11" textAnchor="middle">
        <text x="541" y="888" fill="#0000ff">Z</text>
        <text x="572" y="905" fill="#00f000">Y</text>
        <text x="571" y="940" fill="#ff0000">X</text>
      </g>
      <g fontFamily='"Liberation Sans", "Noto Sans CJK TC", sans-serif' fontWeight="700" fontSize="13" textAnchor="middle" fill="#000">
        <text x="531" y="963">等角視圖</text>
        <text x="1808" y="949">34.439 mm</text>
        <text x="1808" y="963">公制</text>
      </g>
      <path d="M1759.500 940v24M1855.500 940v24M1760 951.500h96" stroke="#000" />
    </svg>
  );
}

const Swatch = ({ color, children }: { color: string; children: ReactNode }) => (
  <svg width="36" height="22" aria-hidden="true">{children}<rect x="0" y="15" width="36" height="6" fill={color} /></svg>
);

const menus = ["檔案(F)", "編輯(E)", "檢視(V)", "分析(A)", "繪圖(C)", "實體(S)", "模型修改(P)", "轉換(X)", "機器類型(M)", "刀具路徑(T)", "螢幕(R)", "設定(I)", "說明(H)"];

export default function App() {
  return (
    <Page>
      <GlobalStyle />
      <svg width="0" height="0" style={{ position: "absolute" }} aria-hidden="true">
        <defs>
          <radialGradient id="shadeLight" cx=".35" cy=".35">{stops([[0, "#d4e4f6"], [1, "#94aac4"]])}</radialGradient>
          <radialGradient id="shadeDark" cx=".3" cy=".3">{stops([[0, "#9cc4ec"], [0.5, "#3a6ca0"], [1, "#1d3c60"]])}</radialGradient>
          <pattern id="check" width="4" height="4" patternUnits="userSpaceOnUse"><path d="M0 0h2v2H0zM2 2h2v2H2z" fill="#555" /></pattern>
        </defs>
      </svg>

      <TitleBar>
        <svg width="18" height="20" viewBox="0 0 18 20" aria-hidden="true">
          <path d="M0 1h5l4 7 3-7h4l-5 10-4 8H3l4-8z" fill="#222" />
          <path d="M10 12l3-2 3 9h-4z" fill="#8a8a8a" /><path d="M2 17l4-4 1 6H1z" fill="#aaa" /><path d="M12 1h4l-5 10-2-3z" fill="#c8962a" />
          <path d="M11 3l4-2-5 9z" fill="#222" />
        </svg>
        <Title>{"(台灣代理: 眾宇科技 WWW.CYTEK.COM.TW)Mastercam 銑床系統 X9  E:\\New-SOFT\\三維網教學\\基礎篇\\練習用檔\\01-error.emcx-9"}</Title>
        <WindowButtons>
          <WinButton aria-label="Minimize"><svg width="10" height="12"><path d="M1 10h8" stroke="#666" strokeWidth="2" /></svg></WinButton>
          <WinButton aria-label="Restore"><svg width="11" height="12"><path d="M3.500 4V1.500h6v6H7M1.500 4.500h5v6h-5z" stroke="#666" fill="none" strokeWidth="1.500" /></svg></WinButton>
          <WinButton aria-label="Close"><svg width="11" height="10"><path d="M1 0l9 10M10 0L1 10" stroke="#666" strokeWidth="1.500" /></svg></WinButton>
        </WindowButtons>
      </TitleBar>
      <MenuBar>{menus.map(m => <MenuItem key={m}>{m}</MenuItem>)}</MenuBar>
      <MainStrip><Tools items={row1} /></MainStrip>
      <MainStrip><Tools items={row2} /></MainStrip>
      <CoordRow>
        <Grip />
        <Coord axis="X" value="-165.27109" />
        <Coord axis="Y" value="-116.57812" />
        <Coord axis="Z" value="0.0" />
        <SelectStrip><Tools items={row3} /></SelectStrip>
      </CoordRow>

      <Body>
        <Dock $side="left">
          <Strip $vertical><Tools items={leftDock} vertical /></Strip>
          <More aria-label="More">
            <svg width="16" height="22"><path d="M1 2l7 6 7-6M1 12l7 6 7-6" fill="none" stroke="#757575" strokeWidth="2.500" /></svg>
          </More>
        </Dock>
        <Center>
          <RibbonName>功能區列</RibbonName>
          <Workspace>
            <Panel>
              <PanelHead>
                <PanelTitle>刀具路徑</PanelTitle>
                <WinButton aria-label="Menu"><svg width="11" height="6"><path d="M0 0h11L6 6z" fill="#666" /></svg></WinButton>
                <WinButton aria-label="Pin"><svg width="9" height="12"><path d="M2 1h5M2.500 1v6M6.500 1v6M0 7.500h9M4.500 8v4" stroke="#666" fill="none" /></svg></WinButton>
                <WinButton aria-label="Close"><svg width="11" height="11"><path d="M1 1l9 9M10 1l-9 9" stroke="#666" strokeWidth="1.500" /></svg></WinButton>
              </PanelHead>
              <PanelTools>
                <Strip $h={23}><Tools items={panelRow1} size={22} icon={16} /></Strip>
                <Strip $h={23}><Tools items={panelRow2} size={22} icon={16} /></Strip>
              </PanelTools>
              <TreeFrame><TreeView /></TreeFrame>
            </Panel>
            <ViewColumn>
              <Viewport><Scene /></Viewport>
              <TabBar><Tab>翋弝芞醱啣</Tab><TabRest /></TabBar>
            </ViewColumn>
            <Leader width="126" height="92" aria-hidden="true"><path d="M2 88L122 6" stroke="#ed1c24" strokeWidth="5" /></Leader>
            <Callout>
              <CalloutEdges width="553" height="38" aria-hidden="true">
                <path d="M16 0h14" stroke="#999" />
                <path d="M40 0c1 6 9 6 10 0zM53 0c1 6 9 6 10 0z" fill="#00c8f0" stroke="#0000c0" />
                <path d="M53 26v12M82 34v4" stroke="#333" strokeDasharray="1 2" />
                <path d="M100 38v-3h5l2-2h8l2 2h6v3z" fill="#999" stroke="#000" strokeWidth="1.500" />
                <path d="M138 37h8M150 37h6M160 37h7" stroke="#444" strokeWidth="2" />
              </CalloutEdges>
              <Expander $size={18} aria-label="Toggle"><ExpandMark size={15} /></Expander>
              <svg width="26" height="26" viewBox="0 0 16 16" aria-hidden="true">{folder}</svg>
              <CalloutText>{mixed(picked, CalloutLatin)}</CalloutText>
            </Callout>
          </Workspace>
        </Center>
        <Dock $side="right">
          <Strip $vertical><Tools items={rightTop} vertical /></Strip>
          <DockGap />
          <Strip $vertical><Tools items={rightBottom} vertical /></Strip>
        </Dock>
      </Body>

      <StatusBar>
        <StatusText>{"WCS: 俯視圖  刀具/構圖平面: 俯視圖"}</StatusText>
        <StatusButton $w={31}>3D</StatusButton>
        <StatusButton $w={76}>螢幕視角</StatusButton>
        <StatusButton $w={55}>WCS</StatusButton>
        <StatusButton $w={32}>平面</StatusButton>
        <StatusLabel $w={17} $bg="#f0f0f0" htmlFor="depth">Z</StatusLabel>
        <DepthBox><DepthInput id="depth" defaultValue="0.0" /><Chevron /></DepthBox>
        <StatusButton $w={39} aria-label="Wireframe color">
          <Swatch color="#000080"><path d="M14 3h6v6h-6zM17 6h6v6h-6z" fill="none" stroke="#333" /></Swatch>
        </StatusButton>
        <StatusButton $w={39} aria-label="Solid color">
          <Swatch color="#808080"><path d="M13 4l5-2 5 2v6l-5 3-5-3z" fill="#999" /><path d="M18 6l5-2v6l-5 3z" fill="#222" /></Swatch>
        </StatusButton>
        <StatusButton $w={39} aria-label="Surface color">
          <Swatch color="#ff8040"><path d="M13 5l10-2v8l-10 1zM13 8l10-1M18 4v8" fill="#bbb" stroke="#666" /></Swatch>
        </StatusButton>
        <StatusLabel $w={36} $bg="#ff8080" htmlFor="level">層別</StatusLabel>
        <LevelBox>
          <LevelSelect id="level"><option>2 : Solid</option></LevelSelect>
          <Chevron />
        </LevelBox>
        <StatusButton $w={41} $bg="#f4f4f4">屬性</StatusButton>
        <StatusButton $w={50} aria-label="Point style">
          <svg width="14" height="16"><path d="M4 2v8M1 6h6M6 8l6 6M7 10h4v5H7z" fill="none" stroke="#222" /></svg>
          <TinyArrow />
        </StatusButton>
        <StatusButton $w={74} aria-label="Line style">
          <svg width="46" height="4"><path d="M0 2h46" stroke="#000" strokeWidth="3" /></svg>
          <TinyArrow />
        </StatusButton>
        <StatusButton $w={83} aria-label="Line width">
          <svg width="56" height="4"><path d="M0 2h56" stroke="#000" strokeWidth="2" /></svg>
          <TinyArrow />
        </StatusButton>
        <StatusButton $w={48}>群組</StatusButton>
        <StatusButton $w={26}>?</StatusButton>
      </StatusBar>
    </Page>
  );
}
